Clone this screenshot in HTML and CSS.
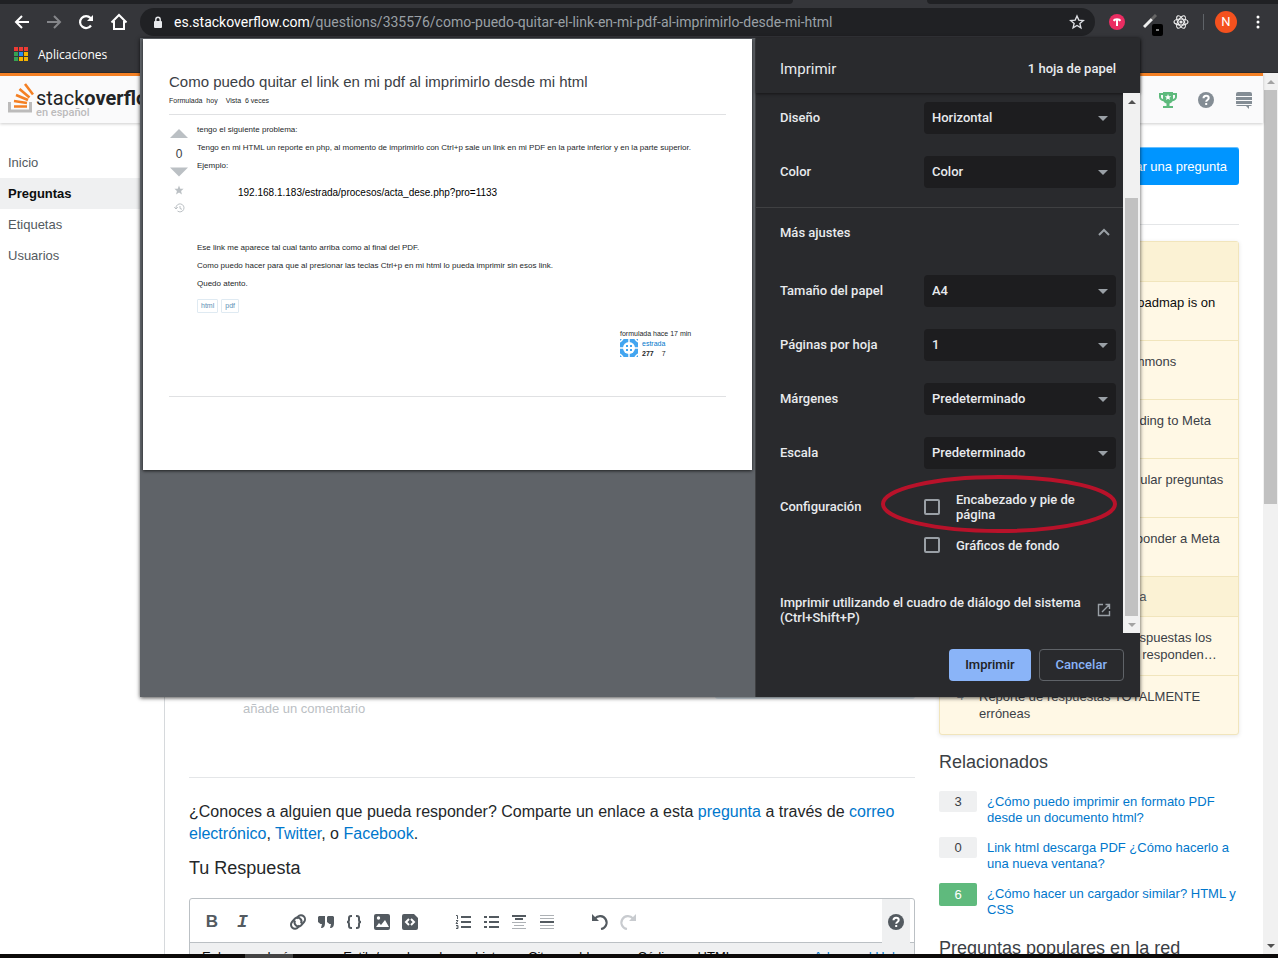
FILE: index.html
```html
<!DOCTYPE html>
<html lang="es">
<head>
<meta charset="utf-8">
<title>Como puedo quitar el link en mi pdf al imprimirlo desde mi html</title>
<link rel="stylesheet" href="styles.css">
</head>
<body>
<header class="browser">
  <div class="tabstrip"><span class="tab-inactive"></span><span class="tab-active"></span><span class="tab-rest"></span></div>
  <div class="toolbar">
    <div class="nav-buttons">
      <button class="icon-btn" aria-label="Atrás"><svg width="16" height="16" viewBox="0 0 16 16" fill="none" stroke="#fff" stroke-width="2"><path d="M15 8H2M8 2 2 8l6 6"/></svg></button>
      <button class="icon-btn" aria-label="Adelante"><svg width="16" height="16" viewBox="0 0 16 16" fill="none" stroke="#85868a" stroke-width="2"><path d="M1 8h13M8 2l6 6-6 6"/></svg></button>
      <button class="icon-btn" aria-label="Recargar"><svg width="16" height="16" viewBox="0 0 16 16"><path d="M13 11.5A6 6 0 1 1 12.500 4L14 5.500" fill="none" stroke="#fff" stroke-width="2.200"/><path d="M15 1v6H9z" fill="#fff"/></svg></button>
      <button class="icon-btn" aria-label="Inicio"><svg width="18" height="18" viewBox="0 0 18 18" fill="none" stroke="#fff" stroke-width="2"><path d="M1.500 9.500 9 2l7.500 7.500M4 8v8h10V8"/></svg></button>
    </div>
    <div class="omnibox">
      <svg width="10" height="13" viewBox="0 0 10 13"><rect x="1" y="5" width="8" height="7" rx="1" fill="#e8eaed"/><path d="M2.800 5V3.500a2.200 2.200 0 0 1 4.400 0V5" fill="none" stroke="#e8eaed" stroke-width="1.400"/></svg>
      <span class="url"><span class="url-host">es.stackoverflow.com</span>/questions/335576/como-puedo-quitar-el-link-en-mi-pdf-al-imprimirlo-desde-mi-html</span>
      <button class="icon-btn" aria-label="Marcador"><svg width="16" height="16" viewBox="0 0 24 24" fill="none" stroke="#dfe1e5" stroke-width="2"><path d="m12 3 2.700 6.200 6.800.6-5.200 4.400 1.600 6.600-5.900-3.500-5.900 3.500 1.600-6.600L2.500 9.800l6.800-.6z"/></svg></button>
    </div>
    <div class="extensions">
      <svg width="16" height="16" viewBox="0 0 16 16"><circle cx="8" cy="8" r="8" fill="#ea2d62"/><path d="M4 6.500c0-3 8-3 8 0L10.500 7.500 9.500 6.500H9V12H7V6.500h-.5l-1 1z" fill="#fff"/></svg>
      <svg class="wand" width="20" height="22" viewBox="0 0 20 22"><path d="M1 13 9 5" stroke="#eee" stroke-width="3"/><path d="m9 5 4-4" stroke="#666" stroke-width="3"/><rect x="9" y="10" width="11" height="12" rx="2" fill="#000"/><path d="M13 16h3" stroke="#fff"/></svg>
      <svg class="atom" width="16" height="16" viewBox="0 0 16 16" fill="none" stroke="#eee" stroke-width="1.200"><ellipse cx="8" cy="8" rx="7" ry="3"/><ellipse cx="8" cy="8" rx="7" ry="3" transform="rotate(60 8 8)"/><ellipse cx="8" cy="8" rx="7" ry="3" transform="rotate(120 8 8)"/><circle cx="8" cy="8" r="1" fill="#eee"/></svg>
      <span class="divider"></span>
      <span class="profile">N</span>
      <button class="icon-btn menu" aria-label="Menú"><svg width="4" height="14" viewBox="0 0 4 14" fill="#fff"><circle cx="2" cy="2" r="1.500"/><circle cx="2" cy="7" r="1.500"/><circle cx="2" cy="12" r="1.500"/></svg></button>
    </div>
  </div>
  <div class="bookmarks">
    <svg width="14" height="14" viewBox="0 0 14 14"><path d="M0 0h4v4H0zM5 0h4v4H5zM10 0h4v4h-4z" fill="#ee3b34"/><path d="M0 5h4v4H0zM0 10h4v4H0z" fill="#35a353"/><path d="M5 5h4v4H5z" fill="#2b8cf0"/><path d="M10 5h4v4h-4zM5 10h4v4H5zM10 10h4v4h-4z" fill="#f6b400"/></svg>
    <span>Aplicaciones</span>
  </div>
</header>

<div class="viewport">
  <div class="page">
    <header class="topbar">
      <a class="logo" href="#">
        <svg width="26" height="31" viewBox="0 0 26 31" fill="none"><path d="M1.500 20v9h21v-9" stroke="#bcbbbb" stroke-width="3"/><path d="M6 24.500h13M6 19l13 2M8 13l12 5M11.500 7l10 8.500M17 2l8 10.500" stroke="#f48024" stroke-width="2.600"/></svg>
        <span class="wordmark"><span class="wordmark-name">stack<b>overflow</b></span><span class="wordmark-lang">en español</span></span>
      </a>
      <nav class="top-icons" aria-label="Cuenta">
        <a href="#" aria-label="Logros"><svg width="18" height="18" viewBox="0 0 18 18"><path d="M4 1h10v1h4v4c0 2-2 4-4.500 4.200C12.700 11.500 11.500 12.300 10.500 12.500V15H14v2H4v-2h3.500v-2.500C6.500 12.300 5.300 11.500 4.500 10.200 2 10 0 8 0 6V2h4zM2 4v2c0 1 .8 1.800 2 2V4zm12 0v4c1.200-.2 2-1 2-2V4z" fill="#5eba7d"/><path d="m9 3 .9 2.200 2.300.1-1.800 1.500.6 2.200-2-1.200L7 9l.6-2.200-1.800-1.500 2.300-.1z" fill="#fff"/></svg></a>
        <a href="#" aria-label="Ayuda"><svg width="18" height="18" viewBox="0 0 18 18"><circle cx="9" cy="9" r="8" fill="#848d95"/><path d="M6.500 7.200C6.500 3.800 11.700 4 11.700 7c0 1.900-2.500 2-2.500 3.800M9.200 12v2" fill="none" stroke="#fff" stroke-width="2"/></svg></a>
        <a href="#" aria-label="Comunidades"><svg width="18" height="18" viewBox="0 0 18 18" fill="#848d95"><path d="M3 1h12a2 2 0 0 1 2 2v2H1V3a2 2 0 0 1 2-2zM1 6h16v3H1zM1 10h16v3H1zM1 14h16a2 2 0 0 1-2 1h-1v3l-3-3H3a2 2 0 0 1-2-1z"/></svg></a>
      </nav>
    </header>

    <div class="columns">
      <nav class="side-nav" aria-label="Principal">
        <a href="#">Inicio</a>
        <a href="#" class="current">Preguntas</a>
        <a href="#">Etiquetas</a>
        <a href="#">Usuarios</a>
      </nav>
      <main class="content">
        <div class="question-head"><button class="ask">Formular una pregunta</button></div>
        <div class="content-columns">
          <section class="question">
            <div class="post-space"></div>
            <div class="user-card"></div>
            <a class="add-comment" href="#">añade un comentario</a>
            <p class="share">¿Conoces a alguien que pueda responder? Comparte un enlace a esta <a href="#">pregunta</a> a través de <a href="#">correo electrónico</a>, <a href="#">Twitter</a>, o <a href="#">Facebook</a>.</p>
            <h2>Tu Respuesta</h2>
            <div class="editor">
              <div class="editor-bar">
                <div class="tools">
                  <button class="tool tool-bold" aria-label="Negrita">B</button>
                  <button class="tool tool-italic" aria-label="Cursiva">I</button>
                </div>
                <div class="tools">
                  <button class="tool" aria-label="Enlace"><svg width="18" height="18" viewBox="0 0 18 18" fill="none" stroke="#535a60" stroke-width="2"><path d="M10.500 12.500 9 14.300A4 4 0 0 1 3 9l3-3.500a4 4 0 0 1 6 5"/><path d="m7.500 5.500 1.500-1.800A4 4 0 0 1 15 9l-3 3.500a4 4 0 0 1-6-5"/></svg></button>
                  <button class="tool" aria-label="Cita"><svg width="18" height="18" viewBox="0 0 18 18" fill="#535a60"><path d="M2 3h6v7c0 3-1 5-4 5l1-4H3.500L1 9V4zM11 3h5l1 1v6c0 3-1 5-4 5l1-4h-1.500L10 9V4z"/></svg></button>
                  <button class="tool" aria-label="Código"><svg width="18" height="18" viewBox="0 0 18 18" fill="none" stroke="#535a60" stroke-width="2"><path d="M7 3H6Q4 3 4 5v2Q4 9 2 9q2 0 2 2v2q0 2 2 2h1M11 3h1q2 0 2 2v2q0 2 2 2-2 0-2 2v2q0 2-2 2h-1"/></svg></button>
                  <button class="tool" aria-label="Imagen"><svg width="18" height="18" viewBox="0 0 18 18"><rect x="1" y="1" width="16" height="16" rx="2" fill="#535a60"/><path d="m3 14 3-4 2 2 4-5 4 7z" fill="#fff"/><circle cx="5.500" cy="5" r="1.700" fill="#fff"/></svg></button>
                  <button class="tool" aria-label="Fragmento"><svg width="18" height="18" viewBox="0 0 18 18"><path d="M3 1h10l4 4v10a2 2 0 0 1-2 2H3a2 2 0 0 1-2-2V3a2 2 0 0 1 2-2z" fill="#535a60"/><path d="M8 6 5 9l3 3M10 6l3 3-3 3" fill="none" stroke="#fff" stroke-width="2"/></svg></button>
                </div>
                <div class="tools">
                  <button class="tool" aria-label="Lista numerada"><svg width="18" height="18" viewBox="0 0 18 18" fill="none" stroke="#535a60"><path d="M7 4h10M7 9h10M7 14h10" stroke-width="2"/><path d="M2 2.500h1.500V6M2 7.500h2L2 10.500h2M2 12.500h2v3H2M2.500 14H4"/></svg></button>
                  <button class="tool" aria-label="Lista"><svg width="18" height="18" viewBox="0 0 18 18" stroke="#535a60" stroke-width="2"><path d="M7 4h10M7 9h10M7 14h10M2 4h3M2 9h3M2 14h3"/></svg></button>
                  <button class="tool" aria-label="Encabezado"><svg width="18" height="18" viewBox="0 0 18 18" stroke="#535a60"><path d="M2 3h14M5 6h8" stroke-width="2"/><path d="M2 9.500h14M4 12.500h10M2 15.500h14" stroke="#adb1b5"/></svg></button>
                  <button class="tool" aria-label="Línea"><svg width="18" height="18" viewBox="0 0 18 18" stroke="#adb1b5"><path d="M2 2.500h14M2 5.500h14M2 12.500h14M2 15.500h14"/><path d="M2 9h14" stroke="#535a60" stroke-width="2"/></svg></button>
                </div>
                <div class="tools">
                  <button class="tool" aria-label="Deshacer"><svg width="18" height="18" viewBox="0 0 18 18"><path d="M4 5.500a6.500 6.500 0 1 1 6 10.500" fill="none" stroke="#535a60" stroke-width="2.200"/><path d="M1 1v7h7z" fill="#535a60"/></svg></button>
                  <button class="tool" aria-label="Rehacer"><svg width="18" height="18" viewBox="0 0 18 18"><path d="M14 5.500A6.500 6.500 0 1 0 8 16" fill="none" stroke="#c8cbcf" stroke-width="2.200"/><path d="M17 1v7h-7z" fill="#c8cbcf"/></svg></button>
                </div>
                <button class="tool tool-help" aria-label="Ayuda de edición"><svg width="18" height="18" viewBox="0 0 18 18"><circle cx="9" cy="9" r="8" fill="#535a60"/><path d="M6.500 7.200C6.500 3.800 11.700 4 11.700 7c0 1.900-2.500 2-2.500 3.800M9.200 12v2" fill="none" stroke="#fff" stroke-width="2"/></svg></button>
              </div>
              <div class="editor-help">
                <span>Enlaces</span><span>Imágenes</span><span>Estilo/encabezados</span><span>Listas</span><span>Citas en bloque</span><span>Código</span><span>HTML</span><a href="#">Advanced Help</a>
              </div>
            </div>
          </section>

          <aside class="sidebar">
            <div class="bulletin">
              <h3></h3>
              <p class="visited"><span class="mark"></span><span>The Q1 2020 Community Roadmap is on the Blog</span></p>
              <p><span class="mark"></span><span>An Update On Creative Commons Licensing</span></p>
              <p><span class="mark"></span><span>Our new process for responding to Meta</span></p>
              <p><span class="mark"></span><span>¿Cuándo es adecuado formular preguntas aquí?</span></p>
              <p><span class="mark"></span><span>Una nueva página para responder a Meta</span></p>
              <h3>Publicaciones populares en Meta</h3>
              <p><span class="mark">7</span><span>¿Por qué no aceptan sus respuestas los usuarios, mientras tampoco responden…</span></p>
              <p><span class="mark">4</span><span>Reporte de respuestas TOTALMENTE erróneas</span></p>
            </div>
            <h2>Relacionados</h2>
            <ul class="related">
              <li><span class="score">3</span><a href="#">¿Cómo puedo imprimir en formato PDF desde un documento html?</a></li>
              <li><span class="score">0</span><a href="#">Link html descarga PDF ¿Cómo hacerlo a una nueva ventana?</a></li>
              <li><span class="score answered">6</span><a href="#">¿Cómo hacer un cargador similar? HTML y CSS</a></li>
            </ul>
            <h2>Preguntas populares en la red</h2>
          </aside>
        </div>
      </main>
    </div>
  </div>
  <div class="scrollbar page-scroll" aria-hidden="true"><span class="arrow up dim"></span><span class="thumb"></span><span class="arrow down"></span></div>
</div>
<footer class="taskbar"><span></span></footer>

<div class="print-layer">
  <section class="print-dialog" role="dialog" aria-label="Imprimir">
    <div class="preview">
      <article class="sheet">
        <h1>Como puedo quitar el link en mi pdf al imprimirlo desde mi html</h1>
        <p class="sheet-meta"><span>Formulada&nbsp; hoy</span><span>Vista&nbsp; 6 veces</span></p>
        <div class="sheet-post">
          <div class="votes">
            <svg width="18" height="10" viewBox="0 0 18 10"><path d="M9 0l9 9H0z" fill="#bbc0c4"/></svg>
            <span>0</span>
            <svg width="18" height="10" viewBox="0 0 18 10"><path d="M9 9.500 18 .5H0z" fill="#bbc0c4"/></svg>
            <svg width="10" height="10" viewBox="0 0 24 24"><path d="m12 1 3 8h8l-6 5.500 2 8.500-7-5-7 5 2-8.500L1 9h8z" fill="#bbc0c4"/></svg>
            <svg width="11" height="10" viewBox="0 0 11 10" fill="none" stroke="#bbc0c4"><path d="M2 5a4 4 0 1 1 1.500 3M6 3v2.500l2 .8M.3 4.200 2 6l1.800-1.800"/></svg>
          </div>
          <div class="sheet-body">
            <p>tengo el siguiente problema:</p>
            <p>Tengo en mi HTML un reporte en php, al momento de imprimirlo con Ctrl+p sale un link en mi PDF en la parte inferior y en la parte superior.</p>
            <p>Ejemplo:</p>
            <p class="sample">192.168.1.183/estrada/procesos/acta_dese.php?pro=1133</p>
            <p>Ese link me aparece tal cual tanto arriba como al final del PDF.</p>
            <p>Como puedo hacer para que al presionar las teclas Ctrl+p en mi html lo pueda imprimir sin esos link.</p>
            <p>Quedo atento.</p>
            <div class="tags"><a href="#">html</a><a href="#">pdf</a></div>
            <div class="signature">
              <span>formulada hace 17 min</span>
              <div class="author">
                <svg width="18" height="18" viewBox="0 0 18 18"><rect width="18" height="18" fill="#42a5f0"/><circle cx="9" cy="9" r="6" fill="#fff"/><path d="M0 3l3-3M15 0l3 3M0 15l3 3M18 15l-3 3M9 0v4M9 14v4M0 9h4M14 9h4" stroke="#fff" stroke-width="1.500"/><path d="M6 6h2v2H6zM10 6h2v2h-2zM6 10h2v2H6zM10 10h2v2h-2z" fill="#42a5f0"/></svg>
                <div><a href="#">estrada</a><span class="rep"><b>277</b><span>7</span></span></div>
              </div>
            </div>
          </div>
        </div>
        <hr>
      </article>
    </div>
    <form class="settings">
      <header class="settings-head"><h2>Imprimir</h2><span>1 hoja de papel</span></header>
      <div class="settings-scroll">
        <div class="settings-body">
          <div class="group">
            <div class="field"><label for="layout">Diseño</label><span class="select"><select id="layout"><option>Horizontal</option></select></span></div>
            <div class="field"><label for="color">Color</label><span class="select"><select id="color"><option>Color</option></select></span></div>
          </div>
          <button type="button" class="more">Más ajustes<svg width="12" height="8" viewBox="0 0 12 8" fill="none" stroke="#9aa0a6" stroke-width="2"><path d="m1 7 5-5 5 5"/></svg></button>
          <div class="group group-more">
            <div class="field"><label for="paper">Tamaño del papel</label><span class="select"><select id="paper"><option>A4</option></select></span></div>
            <div class="field"><label for="pages">Páginas por hoja</label><span class="select"><select id="pages"><option>1</option></select></span></div>
            <div class="field"><label for="margins">Márgenes</label><span class="select"><select id="margins"><option>Predeterminado</option></select></span></div>
            <div class="field"><label for="scale">Escala</label><span class="select"><select id="scale"><option>Predeterminado</option></select></span></div>
            <div class="field options">
              <span class="options-label">Configuración</span>
              <div class="checks">
                <label><input type="checkbox"><span>Encabezado y pie de página</span></label>
                <label><input type="checkbox"><span>Gráficos de fondo</span></label>
              </div>
              <svg class="marker" width="238" height="60" viewBox="0 0 238 60" fill="none" stroke="#b8122a" stroke-width="4"><ellipse cx="118" cy="30" rx="116" ry="27"/></svg>
            </div>
          </div>
          <a class="system" href="#"><span>Imprimir utilizando el cuadro de diálogo del sistema (Ctrl+Shift+P)</span><svg width="14" height="14" viewBox="0 0 14 14" fill="none" stroke="#9aa0a6" stroke-width="1.400"><path d="M6 1.500H1.500v11h11V8M8.500 1.500h4V6M12.500 1.500 5 9"/></svg></a>
        </div>
        <div class="scrollbar panel-scroll" aria-hidden="true"><span class="arrow up"></span><span class="thumb"></span><span class="arrow down dim"></span></div>
      </div>
      <footer class="actions"><button type="button" class="primary">Imprimir</button><button type="button" class="secondary">Cancelar</button></footer>
    </form>
  </section>
</div>
</body>
</html>
```
FILE: styles.css
```css
* { box-sizing: border-box; }
body {
  margin: 0;
  height: 100vh;
  display: flex;
  flex-direction: column;
  overflow: hidden;
  position: relative;
  background: #fff;
  color: #242729;
  font: 13px/17px "Liberation Sans", Arial, sans-serif;
}
h1, h2, h3, p, ul { margin: 0; padding: 0; font-weight: 400; }
ul { list-style: none; }
a { color: #0077cc; text-decoration: none; }
button { font: inherit; border: 0; background: none; padding: 0; cursor: pointer; }
svg { display: block; flex: none; }

/* Browser chrome */
.browser { flex: none; background: #35363a; color: #fff; font-family: "Open Sans", sans-serif; border-bottom: 1px solid #292a2d; }
.tabstrip { display: flex; height: 4px; }
.tab-inactive { flex: 793; background: #202124; border-bottom-right-radius: 4px; }
.tab-active { flex: 134; }
.tab-rest { flex: 351; background: #202124; border-bottom-left-radius: 4px; }
.toolbar { display: flex; align-items: center; height: 36px; padding: 0 18px 0 14px; }
.nav-buttons { display: flex; align-items: center; gap: 16px; width: 126px; }
.omnibox { flex: 1; display: flex; align-items: center; gap: 11px; height: 28px; padding: 0 10px 0 13px; border-radius: 14px; background: #202124; }
.url { flex: 1; font-family: Roboto, sans-serif; font-size: 14px; color: #9aa0a6; white-space: nowrap; overflow: hidden; }
.url-host { color: #fff; }
.extensions { display: flex; align-items: center; gap: 14px; padding-left: 14px; }
.wand { margin-left: 4px; margin-top: 6px; }
.atom { margin-left: -4px; }
.divider { width: 1px; height: 16px; background: #5f6368; }
.profile { width: 22px; height: 22px; margin-left: -3px; border-radius: 50%; background: #f4511e; font: 13px/22px Roboto, sans-serif; text-align: center; }
.menu { margin-left: 5px; }
.bookmarks { display: flex; align-items: center; gap: 10px; height: 32px; padding: 0 14px 4px; font-size: 12px; }

/* Site */
.viewport { flex: 1; min-height: 0; display: flex; overflow: hidden; }
.page { flex: 1; min-width: 0; }
.topbar { display: flex; align-items: center; justify-content: space-between; height: 50px; padding: 0 10px 0 8px; border-top: 3px solid #f48024; background: #fafafb; box-shadow: 0 1px 3px rgba(0, 0, 0, .2); position: relative; }
.logo { display: flex; gap: 2px; color: #222426; }
.wordmark { display: flex; flex-direction: column; padding-top: 6px; font-family: Roboto, sans-serif; }
.wordmark-name { font-size: 20px; line-height: 20px; }
.wordmark-lang { font-size: 11px; line-height: 10px; font-weight: 500; color: #bcbbbb; }
.top-icons { display: flex; gap: 20px; }
.columns { display: flex; align-items: stretch; }
.side-nav { flex: none; width: 165px; padding-top: 24px; border-right: 1px solid #d6d9dc; display: flex; flex-direction: column; }
.side-nav a { padding: 7px 8px; color: #535a60; }
.side-nav .current { background: #eff0f1; color: #0c0d0e; font-weight: 700; }
.content { flex: 1; min-width: 0; padding: 24px; }
.question-head { display: flex; justify-content: flex-end; padding-bottom: 39px; border-bottom: 1px solid #e4e6e8; margin-bottom: 16px; }
.ask { height: 38px; padding: 0 12px; border-radius: 3px; background: #0095ff; color: #fff; box-shadow: inset 0 1px 0 rgba(255, 255, 255, .4); }
.content-columns { display: flex; gap: 24px; }
.question { flex: 1; min-width: 0; }
.post-space { height: 391px; }
.user-card { width: 200px; height: 67px; margin-left: auto; background: #e1ecf4; border-radius: 3px; }
.add-comment { display: block; padding: 1px 54px 60px; color: #bbc0c4; border-bottom: 1px solid #e4e6e8; }
.share { padding: 23px 0 12px; font-size: 16px; line-height: 22px; }
.question h2, .sidebar h2 { font-size: 18px; line-height: 22px; }
.sidebar h2 { color: #3b4045; }
.editor { margin-top: 19px; border: 1px solid #bbc0c4; border-radius: 3px; }
.editor-bar { display: flex; height: 44px; padding: 0 4px 0 8px; border-bottom: 1px solid #bbc0c4; gap: 25px; }
.tools { display: flex; align-items: center; }
.tool { width: 28px; height: 44px; padding-top: 2px; display: flex; align-items: center; justify-content: center; color: #535a60; }
.tool-bold { font-size: 17px; font-weight: 700; }
.tool-italic { font: italic 700 18px "Liberation Mono", monospace; width: 33px; }
.tool-help { margin-left: auto; background: #eff0f1; }
.editor-help { display: flex; background: #eff0f1; padding: 5px 12px 8px; gap: 19px; font-size: 13px; white-space: nowrap; color: #0c0d0e; }
.editor-help a { margin-left: auto; }
.sidebar { flex: none; width: 300px; }
.bulletin { border: 1px solid #f1e5bc; border-radius: 3px; background: #fff8e5; box-shadow: 0 1px 4px rgba(12, 13, 14, .1); margin-bottom: 16px; color: #3b4045; }
.bulletin > * + * { border-top: 1px solid #f1e5bc; }
.bulletin h3 { height: 39px; padding: 11px 15px; background: #fbf2d4; font-size: 13px; color: #535a60; }
.bulletin p { display: flex; min-height: 59px; padding: 12px 8px 12px 15px; }
.bulletin p + h3 { height: 40px; }
.bulletin .visited { color: #0c0d0e; }
.mark { flex: none; width: 24px; padding-left: 2px; font-size: 12px; color: #848d95; }
.related { display: grid; gap: 14px; padding: 18px 0 22px; line-height: 16px; }
.related li { display: flex; gap: 10px; align-items: flex-start; }
.related a { padding-top: 3px; margin-bottom: -3px; }
.score { flex: none; width: 38px; line-height: 21px; text-align: center; border-radius: 2px; background: #eff0f1; color: #3b4045; }
.answered { background: #5fba7d; color: #fff; line-height: 23px; }
.taskbar { flex: none; height: 4px; background: #0c0a09; display: flex; padding-left: 245px; }
.taskbar span { width: 48px; background: #444; }

/* Scroll bars */
.scrollbar { flex: none; display: flex; flex-direction: column; align-items: center; background: #f1f1f1; }
.page-scroll { width: 15px; }
.panel-scroll { width: 17px; }
.arrow { flex: none; width: 100%; height: 17px; display: flex; align-items: center; justify-content: center; color: #505050; }
.arrow.dim { color: #a3a3a3; }
.arrow::after { content: ""; border: 4px solid transparent; border-top-width: 0; border-bottom-color: currentColor; }
.arrow.down::after { border-top-width: 4px; border-bottom-width: 0; border-top-color: currentColor; }
.thumb { width: 13px; background: #c1c1c1; }
.page-scroll .thumb { height: 47%; margin-bottom: auto; }
.panel-scroll .thumb { flex: 1; margin-top: 88px; }

/* Print dialog */
.print-layer { position: absolute; top: 38px; left: 0; right: 0; padding-left: 2px; display: flex; justify-content: center; }
.print-dialog { display: flex; width: min(1000px, 100%); background: #292a2d; box-shadow: 0 1px 4px rgba(0, 0, 0, .7); }
.preview { flex: 1; min-width: 0; padding: 1px 3px; background: #5f6368; border-right: 1px solid #3f4042; }
.sheet { aspect-ratio: 297 / 210; padding: 33px 26px 0; background: #fff; color: #3b4045; box-shadow: 0 1px 3px rgba(0, 0, 0, .7); font-size: 8px; line-height: 10px; }
.sheet h1 { font-size: 15px; line-height: 20px; }
.sheet-meta { display: flex; gap: 8px; padding: 4px 0 8px; border-bottom: 1px solid #e0e1e3; font-size: 7px; color: #242729; }
.sheet-post { display: flex; gap: 8px; padding-top: 10px; }
.votes { width: 20px; display: flex; flex-direction: column; align-items: center; padding-top: 4px; gap: 8px; font-size: 12px; }
.votes span { padding-top: 2px; }
.sheet-body { flex: 1; min-width: 0; display: flex; flex-direction: column; gap: 8px; color: #242729; }
.sample { padding: 7px 41px 35px; font-size: 10px; line-height: 14px; color: #000; }
.tags { display: flex; gap: 3px; padding-top: 2px; font-size: 7px; }
.tags a { padding: 1px 3px; border: 1px solid #dfeaf2; border-radius: 1px; color: #5a8fb4; }
.signature { width: 106px; margin-left: auto; padding-top: 8px; font-size: 7px; }
.author { display: flex; gap: 4px; }
.author a, .rep { display: block; }
.rep > span { margin-left: 8px; }
.sheet hr { margin: 37px 0 0; border: 0; border-top: 1px solid #e0e1e3; }

.settings { flex: none; width: 384px; max-width: 60%; color: #e8eaed; font: 500 13px/15px Roboto, sans-serif; display: flex; flex-direction: column; }
.settings-head { display: flex; align-items: center; justify-content: space-between; height: 55px; padding: 6px 24px 0; box-shadow: 0 1px 3px rgba(0, 0, 0, .5); font-size: 13px; }
.settings-head h2 { font-size: 15px; line-height: 20px; font-weight: 400; }
.settings-scroll { display: flex; height: 540px; }
.settings-body { flex: 1; min-width: 0; padding-top: 9px; }
.group { display: grid; gap: 22px; padding: 0 7px 19px 24px; border-bottom: 1px solid #3f4042; }
.group-more { padding-top: 19px; border-bottom: 0; }
.field { display: grid; grid-template-columns: 144px 1fr; align-items: center; }
.field > label { padding-bottom: 2px; }
.select { position: relative; display: block; }
.select::after { content: ""; position: absolute; right: 8px; top: 14px; border: 5px solid transparent; border-top-color: #9aa0a6; border-bottom: 0; pointer-events: none; }
.select select { appearance: none; width: 100%; height: 32px; padding: 0 8px 2px; border: 0; border-radius: 4px; background: #1d1d1f; color: #e8eaed; font: inherit; }
.more { display: flex; align-items: center; justify-content: space-between; width: 100%; height: 48px; padding: 0 13px 0 24px; color: inherit; }
.options { position: relative; align-items: start; }
.options-label { padding-top: 8px; }
.checks { display: grid; gap: 15px; padding-top: 1px; }
.checks label { display: flex; align-items: center; gap: 16px; }
.checks span { flex: 0 1 130px; }
.checks input { appearance: none; flex: none; width: 16px; height: 16px; margin: 0; border: 2px solid #9aa0a6; border-radius: 2px; }
.marker { position: absolute; left: 101px; top: -17px; pointer-events: none; }
.system { display: flex; align-items: center; justify-content: space-between; padding: 23px 12px 0 24px; color: inherit; }
.system span { flex: 0 1 310px; }
.actions { display: flex; justify-content: flex-end; gap: 8px; padding: 16px; }
.actions button { height: 32px; padding: 0 16px 2px; border-radius: 4px; }
.actions .primary { background: #8ab4f8; color: #202124; }
.actions .secondary { border: 1px solid #5f6368; color: #8ab4f8; }
```
